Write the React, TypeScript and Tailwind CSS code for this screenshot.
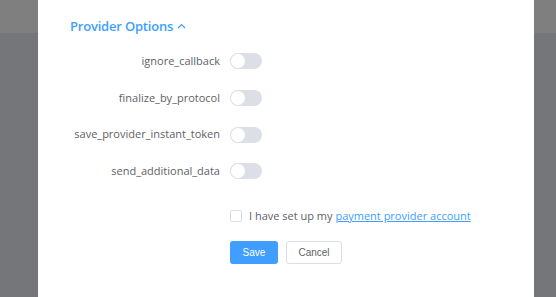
import { useState } from "react";

const options = [
  "ignore_callback",
  "finalize_by_protocol",
  "save_provider_instant_token",
  "send_additional_data",
];

function Toggle() {
  const [on, setOn] = useState(false);
  return (
    <button
      type="button"
      onClick={() => setOn(!on)}
      className={`relative w-[32px] h-[16px] rounded-full ${on ? "bg-[#409eff]" : "bg-[#dcdfe6]"}`}
    >
      <span
        className={`absolute top-[1px] w-[14px] h-[14px] rounded-full bg-white ${on ? "left-[17px]" : "left-[1px]"}`}
      />
    </button>
  );
}

export default function App() {
  const [agreed, setAgreed] = useState(false);

  return (
    <div className="flex h-[297px] w-[556px] overflow-hidden font-['Open_Sans',sans-serif]">
      <div className="w-[38px] flex flex-col">
        <div className="h-[33px] bg-[#7f7f7f]" />
        <div className="flex-1 bg-[#75767a]" />
      </div>

      <div className="flex-1 bg-white">
        <div className="pl-[32px] pt-[16px] flex items-center gap-[4px] text-[#409eff]">
          <span className="text-[13px] font-semibold leading-[20px] tracking-[-0.2px]">Provider Options</span>
          <svg width="9" height="6" viewBox="0 0 9 6" fill="none" stroke="#409eff" strokeWidth="1.2">
            <path d="M1 5 L4.5 1.5 L8 5" />
          </svg>
        </div>

        <div className="mt-[7px] flex flex-col">
          {options.map((o) => (
            <div key={o} className="h-[36.7px] flex items-center">
              <span className="w-[182px] text-right text-[11px] text-[#606266]">{o}</span>
              <span className="ml-[10px] flex">
                <Toggle />
              </span>
            </div>
          ))}
        </div>

        <div className="mt-[18px] ml-[192px] flex items-center gap-[7px]">
          <button
            type="button"
            onClick={() => setAgreed(!agreed)}
            className={`w-[12px] h-[12px] rounded-[2px] border ${agreed ? "bg-[#409eff] border-[#409eff]" : "bg-white border-[#dcdfe6]"}`}
          />
          <span className="text-[11px] text-[#606266]">
            I have set up my{" "}
            <a href="#" className="text-[#409eff] underline">payment provider account</a>
          </span>
        </div>

        <div className="mt-[17px] ml-[192px] flex gap-[8px] font-['Liberation_Sans',sans-serif]">
          <button type="button" className="w-[48px] h-[23px] rounded-[3px] bg-[#409eff] text-white text-[10px]">
            Save
          </button>
          <button type="button" className="w-[56px] h-[23px] rounded-[3px] border border-[#dcdfe6] bg-white text-[#606266] text-[10px]">
            Cancel
          </button>
        </div>
      </div>

      <div className="w-[22px] flex flex-col">
        <div className="h-[33px] bg-[#7f7f7f]" />
        <div className="flex-1 bg-[#75767a]" />
      </div>
    </div>
  );
}
